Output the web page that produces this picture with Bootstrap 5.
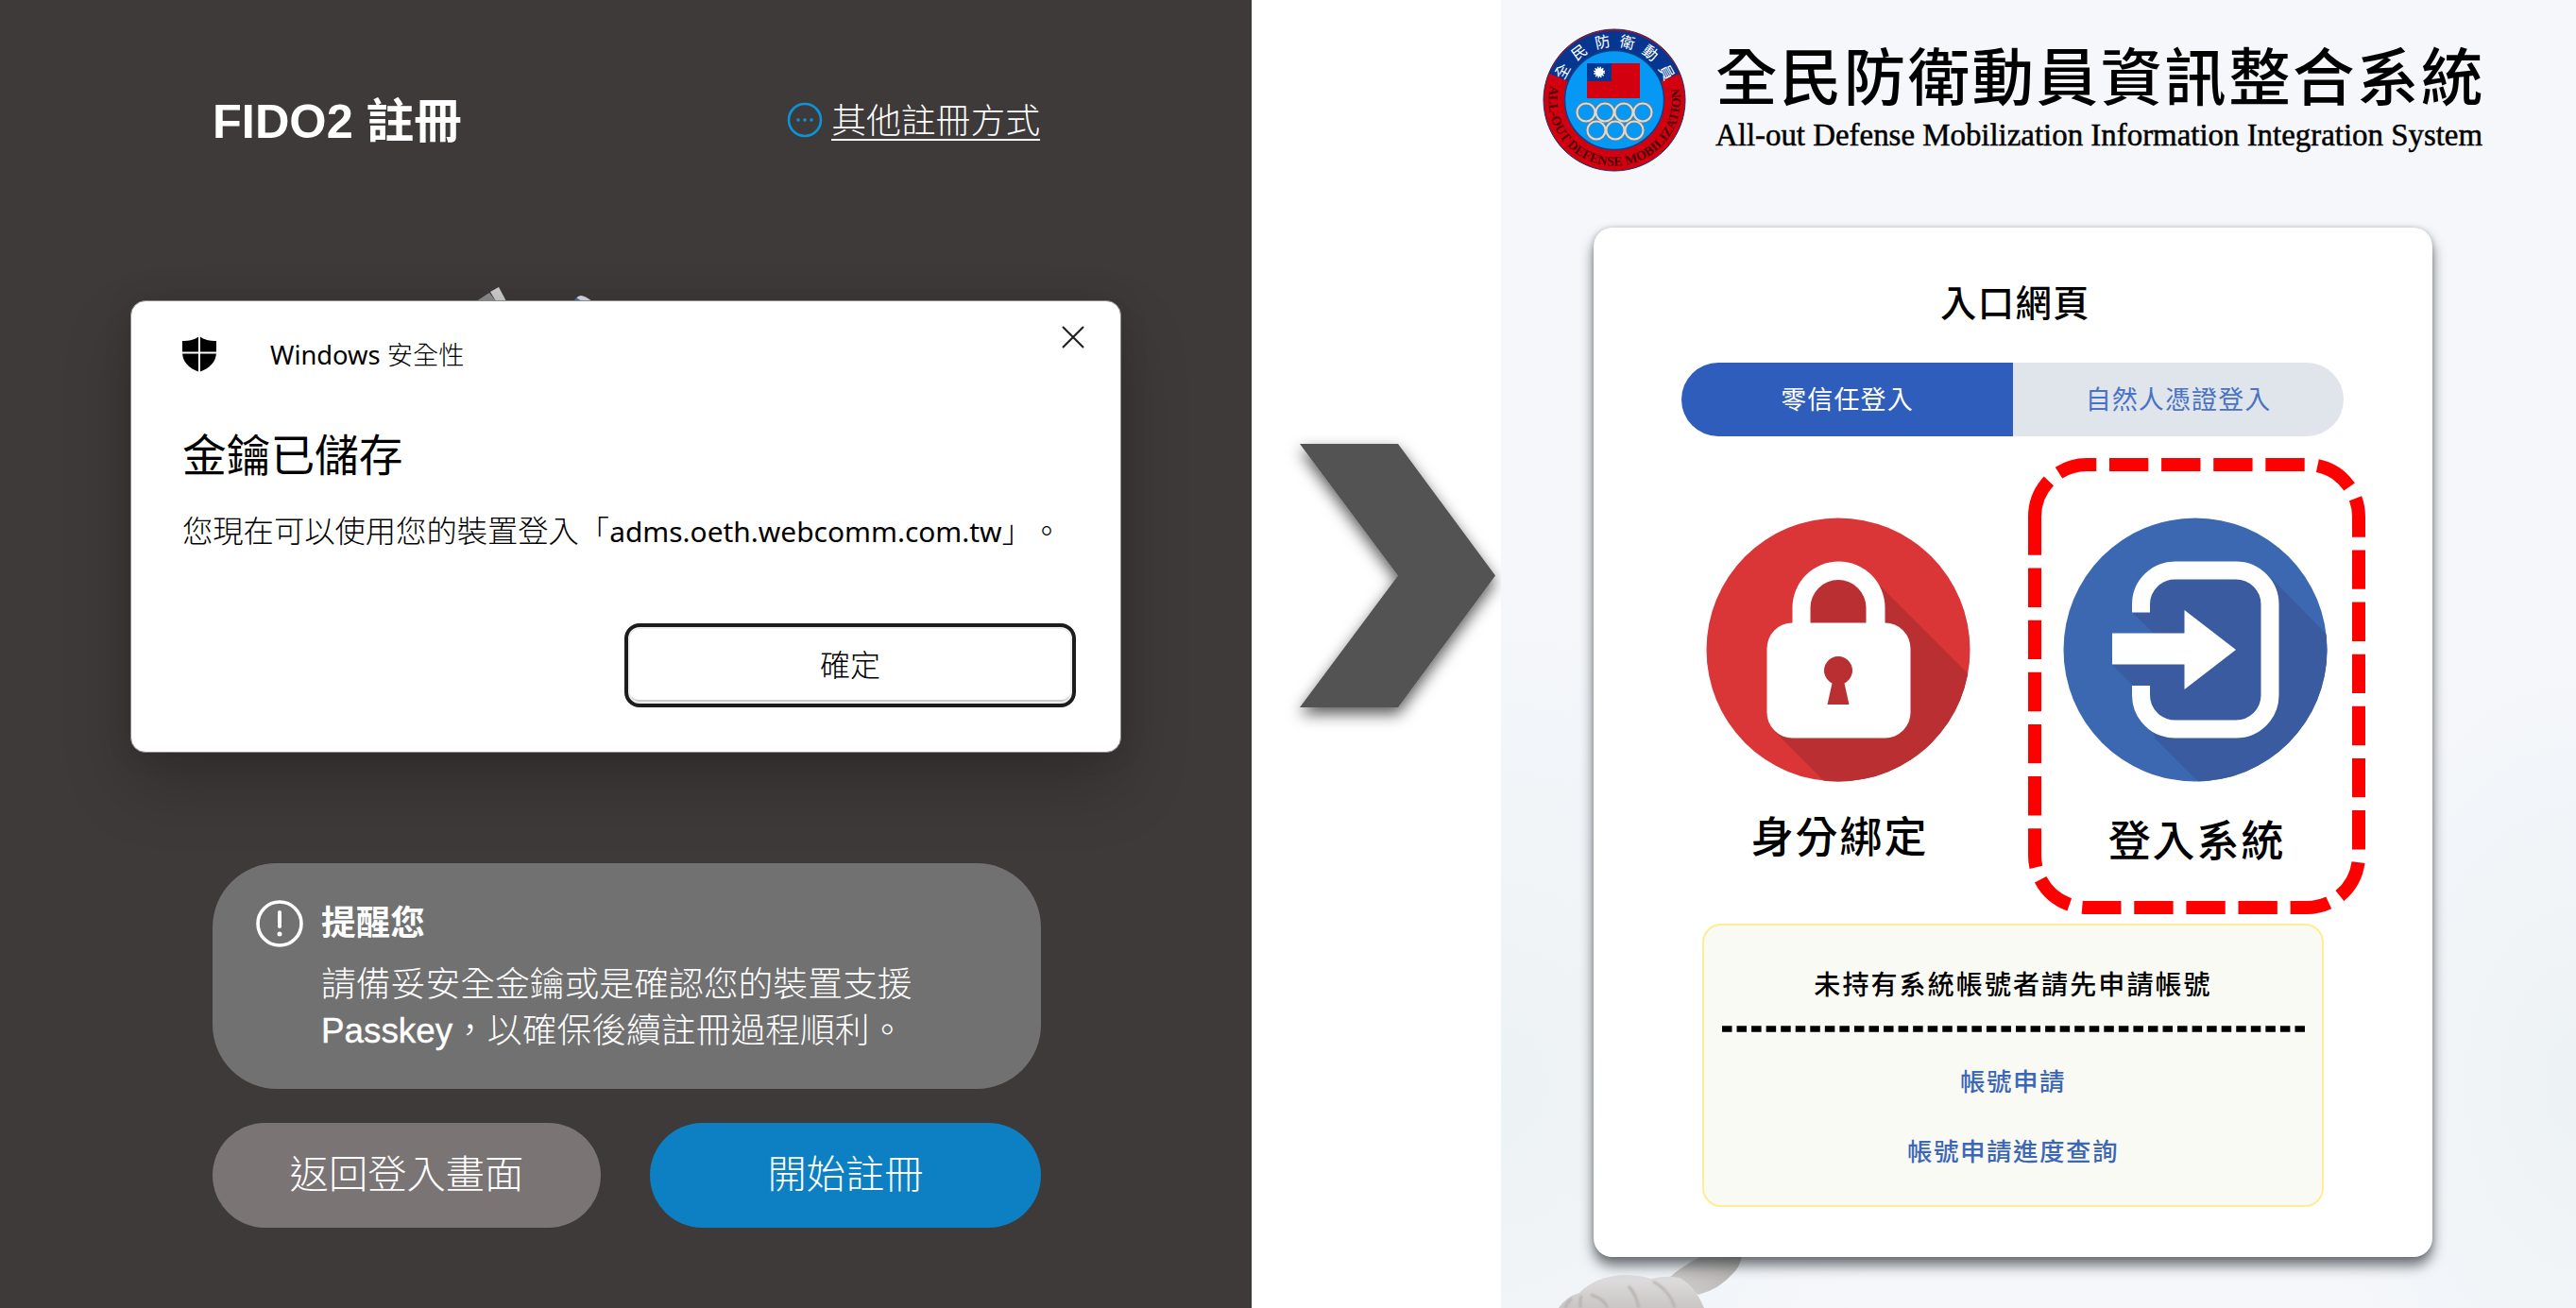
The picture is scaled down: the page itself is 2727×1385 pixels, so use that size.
<!DOCTYPE html>
<html lang="zh-Hant">
<head>
<meta charset="utf-8">
<title>FIDO2 註冊</title>
<link href="https://cdn.jsdelivr.net/npm/bootstrap@5.3.0/dist/css/bootstrap.min.css" rel="stylesheet">
<style>
body{font-family:"Noto Sans CJK TC",sans-serif;background:#fff;color:#000;margin:0}
.stage{width:2727px;height:1385px}
.stage svg{display:block}
.fido{width:1325px;background:#3e3a39;color:#fff;font-family:"Liberation Sans","Noto Sans CJK TC",sans-serif;padding:0 223px 85px 225px}
.fido-head{height:254px}
.fido-title{font-size:50.5px;line-height:60px;font-weight:700;padding-top:3px}
.other{font-size:36.8px;line-height:44px;font-weight:300;color:#fff;gap:9px;margin-right:1px}
.other span{border-bottom:2.5px solid #fff;height:43px;line-height:45px}
.tip{height:239px;border-radius:68px;background:#717171;padding:39px 0 0 46px;gap:19px;margin-bottom:36px}
.tip-title{font-size:36.6px;line-height:50px;font-weight:700;margin-bottom:15px}
.tip-text{font-size:36.8px;line-height:49px;font-weight:300}
.tip-text b{font-weight:400;-webkit-text-stroke:.4px #fff}
.act{height:111px;border-radius:56px;border:0;color:#fff;font-size:41.3px;font-weight:300;line-height:111px;padding:0}
.act-back{width:411px;background:#7a7574}
.act-go{width:414px;background:#0c80c3}
.dlg{left:138px;top:318px;width:1049px;height:479px;border-radius:16px;background:#fff;color:#000;border:1px solid #888;box-shadow:0 34px 70px rgba(0,0,0,.22),0 0 30px rgba(0,0,0,.1);padding:0 47px 0 54px;font-family:"Noto Sans","Noto Sans CJK TC",sans-serif}
.dlg-head{padding-top:26px;height:94px}
.dlg-app{font-size:27.3px;line-height:36px;margin-left:57px;margin-top:13px;font-weight:300}
.dlg-app span{font-weight:400}
.dlg-title{font-size:46.7px;line-height:60px;margin-top:38px}
.dlg-msg{font-size:32.3px;line-height:44px;margin-top:28px;white-space:nowrap;font-weight:300}
.dlg-msg .host{font-weight:400;font-size:29.9px}
.dlg-msg .stop{margin-left:15px}
.dlg-ok{width:478px;height:89px;border:4px solid #1c1c1c;border-radius:16px;background:#fff;font-size:32px;line-height:76px;box-shadow:inset 0 0 0 2px #eee,inset 0 -4px 0 #ccc;margin:75px 0 0 auto;padding:0 0 2px;font-weight:300}
.peek{left:500px;top:300px}
.mid{width:264px}
.portal{width:1138px;background:radial-gradient(ellipse 420px 560px at 0 1150px,#edf2f5,rgba(237,242,245,0)),radial-gradient(ellipse 300px 500px at 100% 1150px,#edf2f5,rgba(237,242,245,0)),#f5f7fb;padding-left:98px}
.brand{height:241px;margin-left:-54px;padding-top:30px;gap:31px}
.brand-name{font-size:65.500px;line-height:80px;font-weight:500;letter-spacing:2.4px;white-space:nowrap;margin-top:8px}
.brand-en{font-family:"Liberation Serif",serif;font-size:32.9px;line-height:40px;white-space:nowrap;-webkit-text-stroke:.5px #000;margin-top:5px}
.pcard{width:888px;height:1090px;border-radius:20px;background:#fff;box-shadow:0 9px 14px rgba(60,66,70,.75),0 0 5px rgba(60,66,70,.25);padding:0 0 0 93px}
.pcard-title{font-size:38.3px;letter-spacing:1.5px;line-height:56px;font-weight:500;margin:0 0 37px;padding-top:50px;padding-right:88px}
.tabs2{width:701px;height:78px;border-radius:39px;overflow:hidden;font-size:27px;line-height:76px;letter-spacing:1.1px}
.tab-on{width:351px;background:#2f5dbb;color:#fff}
.tab-off{width:350px;background:#dfe5eb;color:#4a72c4}
.opts{padding:86px 0 0 26px;gap:98px}
.opt{width:280px}
.opt-name{font-size:45px;letter-spacing:1.9px;line-height:60px;font-weight:500;margin-top:26px;padding-left:3px;text-align:center}
.opt-login .opt-name{margin-top:30px}
.notice{width:658px;height:300px;margin:60px 0 0 22px;border:2.5px solid #ffec94;border-radius:20px;background:#f9faf4;text-align:center;font-weight:500}
.notice-t{font-size:28px;letter-spacing:2.1px;line-height:40px;margin-top:41px}
.notice-l{font-size:26.5px;letter-spacing:1.5px;line-height:40px;color:#3c66b8;text-decoration:none;display:block}
.mark-login{left:2140px;top:478px}
.hand{left:1640px;top:1325px}
</style>
<script src="https://cdn.jsdelivr.net/npm/bootstrap@5.3.0/dist/js/bootstrap.bundle.min.js"></script>
</head>
<body>
<div class="stage d-flex position-relative overflow-hidden">
  <section class="fido d-flex flex-column position-relative flex-shrink-0">
    <div class="fido-head d-flex align-items-center justify-content-between">
      <div class="fido-title">FIDO2 註冊</div>
      <a class="other d-flex align-items-center text-decoration-none" href="#">
        <svg width="38" height="38" viewBox="0 0 38 38"><circle cx="19" cy="19" r="17" fill="none" stroke="#0c93d8" stroke-width="2.6"/><g fill="#0c93d8"><circle cx="12" cy="19" r="1.8"/><circle cx="19" cy="19" r="1.8"/><circle cx="26" cy="19" r="1.8"/></g></svg>
        <span>其他註冊方式</span>
      </a>
    </div>
    <svg class="peek position-absolute" width="140" height="22" viewBox="0 0 140 22"><path d="M4 19l14-9 7 9z" fill="#8e8e8e"/><path d="M19 9l9-5 8 15H25z" fill="#cfcfcf"/><path d="M108 19q3-6 7-6 4 0 12 6z" fill="#d8dde3"/><path d="M108 19l2-4 6 4z" fill="#3f6fae"/></svg>
    <div class="tip d-flex mt-auto">
      <svg width="50" height="50" viewBox="0 0 50 50"><circle cx="25" cy="25" r="23" fill="none" stroke="#fff" stroke-width="3.6"/><path d="M25 13v15" stroke="#fff" stroke-width="4" stroke-linecap="round"/><circle cx="25" cy="36" r="2.5" fill="#fff"/></svg>
      <div><div class="tip-title">提醒您</div><div class="tip-text">請備妥安全金鑰或是確認您的裝置支援<br><b>Passkey</b>，以確保後續註冊過程順利。</div></div>
    </div>
    <div class="d-flex justify-content-between">
      <button class="act act-back">返回登入畫面</button><button class="act act-go">開始註冊</button>
    </div>
    <div class="dlg position-absolute" role="dialog">
      <div class="dlg-head d-flex align-items-start">
        <svg style="margin-top:11px" width="36" height="38" viewBox="0 0 36 38"><path d="M18 0c5 4 11 5 18 5v12c0 10-7 17-18 21C7 34 0 27 0 17V5C7 5 13 4 18 0z"/><path d="M18 0v38M0 17.500h36" stroke="#fff" stroke-width="2"/></svg>
        <div class="dlg-app"><span>Windows</span> 安全性</div>
        <svg class="ms-auto" style="margin-right:-9px" width="24" height="24" viewBox="0 0 24 24"><path d="M1 1l22 22M23 1L1 23" stroke="#222" stroke-width="2.200"/></svg>
      </div>
      <div class="dlg-title">金鑰已儲存</div>
      <div class="dlg-msg">您現在可以使用您的裝置登入「<span class="host">adms.oeth.webcomm.com.tw</span>」<span class="stop">。</span></div>
      <button class="dlg-ok d-block">確定</button>
    </div>
  </section>
  <div class="mid flex-shrink-0 d-flex align-items-center">
    <svg width="264" height="360" viewBox="1325 430 264 360" style="margin-top:-165px"><defs><filter id="sh" x="-20%" y="-20%" width="140%" height="140%"><feDropShadow dx="0" dy="7" stdDeviation="8" flood-opacity=".65"/></filter></defs><path filter="url(#sh)" d="M1376 470h104l103 139.500-103 139.500h-104l104-139.500z" fill="#525252"/></svg>
  </div>
  <section class="portal flex-shrink-0">
    <div class="brand d-flex">
      <svg width="152" height="152" viewBox="-76 -76 152 152">
        <defs><path id="arcTop" d="M-57 0A57 57 0 0 1 57 0"/><path id="arcBot" d="M-67.500 -18A69.800 69.800 0 1 0 67.500 -18"/></defs>
        <circle r="75" fill="#d3000f"/><path d="M0 0L-69-28A75 75 0 0 1 69-28z" fill="#063690"/><circle r="75" fill="none" stroke="#1b2f66" stroke-width="1"/>
        <circle r="52.500" fill="#0598f5" stroke="#123f86" stroke-width="1.500"/>
        <rect x="-29" y="-39" width="56" height="37" fill="#d3000f"/><rect x="-29" y="-39" width="26" height="19" fill="#063690"/><circle cx="-16" cy="-29.500" r="4.500" fill="#fff"/><circle cx="-16" cy="-29.500" r="5" fill="none" stroke="#fff" stroke-width="2" stroke-dasharray="1.300 1.320"/>
        <g fill="none" stroke="#6f7f88" stroke-width="3.400"><circle cx="-30" cy="13" r="9.500"/><circle cx="-10" cy="13" r="9.500"/><circle cx="10" cy="13" r="9.500"/><circle cx="30" cy="13" r="9.500"/><circle cx="-19" cy="32" r="9.500"/><circle cx="1" cy="32" r="9.500"/><circle cx="21" cy="32" r="9.500"/></g>
        <g fill="none" stroke="#dcdcd6" stroke-width="2"><circle cx="-30" cy="13" r="9.500"/><circle cx="-10" cy="13" r="9.500"/><circle cx="10" cy="13" r="9.500"/><circle cx="30" cy="13" r="9.500"/><circle cx="-19" cy="32" r="9.500"/><circle cx="1" cy="32" r="9.500"/><circle cx="21" cy="32" r="9.500"/></g>
        <text font-family="Noto Sans CJK TC" font-size="16" fill="#fff" textLength="138"><textPath href="#arcTop" startOffset="21" textLength="138">全民防衛動員</textPath></text>
        <text font-family="Liberation Serif" font-size="14" font-weight="700" fill="#4a0509" textLength="246"><textPath href="#arcBot" startOffset="3" textLength="246">ALL-OUT DEFENSE MOBILIZATION</textPath></text>
      </svg>
      <div><div class="brand-name">全民防衛動員資訊整合系統</div><div class="brand-en">All-out Defense Mobilization Information Integration System</div></div>
    </div>
    <div class="pcard position-relative overflow-visible" style="z-index:2">
      <div class="pcard-title text-center">入口網頁</div>
      <div class="tabs2 d-flex text-center"><div class="tab-on">零信任登入</div><div class="tab-off">自然人憑證登入</div></div>
      <div class="opts d-flex">
        <div class="opt">
          <svg width="280" height="280" viewBox="1806.500 548.500 280 280"><defs><clipPath id="cr"><circle cx="1946.500" cy="688.500" r="139.500"/></clipPath></defs><circle cx="1946.500" cy="688.500" r="139.500" fill="#da3537"/><path clip-path="url(#cr)" d="M1916 614h60l12 4 112 112v120h-146l-76-76 40-100z" fill="#ba2f31"/><path fill="#fff" fill-rule="evenodd" d="M1898 660v-16a49 49 0 0 1 98 0v16a27 27 0 0 1 27 27v68a27 27 0 0 1-27 27h-98a27 27 0 0 1-27-27v-68a27 27 0 0 1 27-27zM1917 660h59v-16a29.500 29.500 0 0 0-59 0zM1940 724l-5 22.500h23l-5-22.500a15 15 0 1 0-13 0z"/></svg>
          <div class="opt-name">身分綁定</div>
        </div>
        <div class="opt opt-login">
          <svg width="280" height="280" viewBox="2184 548.500 280 280"><defs><clipPath id="cb"><circle cx="2324" cy="688.500" r="139.500"/></clipPath></defs><circle cx="2324" cy="688.500" r="139.500" fill="#3c67b1"/><path clip-path="url(#cb)" d="M2257 648.700L2276 614L2400 608L2492 702V850H2349L2281 782L2276 745L2236 704L2281 672z" fill="#3a5ba0"/><path d="M2266.500 649v-8.500a36 36 0 0 1 36-36h64.500a36 36 0 0 1 36 36v96a36 36 0 0 1-36 36h-64.500a36 36 0 0 1-36-36v-10" fill="none" stroke="#fff" stroke-width="19"/><path d="M2236 671h76.500v-24.500l54.500 42-54.500 42V704H2236z" fill="#fff"/></svg>
          <div class="opt-name">登入系統</div>
        </div>
      </div>
      <div class="notice">
        <div class="notice-t">未持有系統帳號者請先申請帳號</div>
        <svg class="mx-auto" style="margin-top:25px" width="617" height="7"><path d="M0 3.500h617" stroke="#000" stroke-width="6.500" stroke-dasharray="10.500 5.050"/></svg>
        <a class="notice-l" style="margin-top:31px" href="#">帳號申請</a>
        <a class="notice-l" style="margin-top:34px" href="#">帳號申請進度查詢</a>
      </div>
    </div>
  </section>
  <svg class="hand position-absolute" width="210" height="60" viewBox="1640 1325 210 60"><defs><linearGradient id="fg" x1="0" y1="1" x2="1" y2="0"><stop offset="0" stop-color="#d4d2d1"/><stop offset="1" stop-color="#aaa7a4"/></linearGradient><linearGradient id="hg" x1="0" y1="0" x2="0" y2="1"><stop offset="0" stop-color="#e0dfdf"/><stop offset="1" stop-color="#c9c6c5"/></linearGradient><filter id="soft" x="-20%" y="-50%" width="140%" height="200%"><feGaussianBlur stdDeviation="1.200"/></filter></defs><path d="M1768 1352q16-14 36-23h40q-2 13-10 20-14 16-36 22z" fill="url(#fg)"/><path d="M1650 1385q8-12 22-16 16-17 46-19 18 0 30 4 16-4 30-1 16 8 26 32z" fill="url(#hg)"/><path filter="url(#soft)" d="M1724 1362q8 8 11 23M1750 1357q18 10 23 28M1664 1375q-5 4-7 10M1674 1372q-2 6-1 13M1684 1371q14 4 18 14" fill="none" stroke="#b4b0ae" stroke-width="2.500"/></svg>
  <svg class="mark-login position-absolute" style="z-index:3" width="372" height="498" viewBox="2140 478 372 498"><path d="M2154 547a55 55 0 0 1 55-55h233a55 55 0 0 1 55 55v359a55 55 0 0 1-55 55h-233a55 55 0 0 1-55-55z" fill="none" stroke="#f00" stroke-width="14" stroke-dasharray="41.340 13.780"/></svg>
</div>
</body>
</html>
